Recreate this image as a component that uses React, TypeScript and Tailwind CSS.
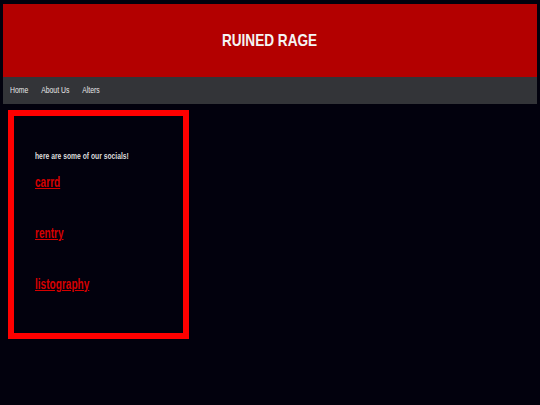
export default function App() {
  return (
    <div
      className="min-h-[405px] w-full bg-[#02010d] pt-1 px-[3px]"
      style={{ fontFamily: '"Liberation Sans", Arial, sans-serif' }}
    >
      {/* Header */}
      <div className="h-[73px] bg-[#b30000] flex items-center justify-center">
        <h1 className="text-[17px] font-bold text-[#f4f4f4] scale-x-[0.8]">RUINED RAGE</h1>
      </div>

      {/* Nav */}
      <nav className="h-[27px] bg-[#333438] flex items-center px-[7px]">
        <div className="flex items-center gap-[17px] text-[9px] text-[#e8e8e8] origin-left scale-x-[0.76]">
          <a>Home</a>
          <a>About Us</a>
          <a>Alters</a>
        </div>
      </nav>

      {/* Socials box */}
      <div className="mt-[6px] ml-[5px] w-[181px] h-[229px] border-[6px] border-[#ff0000] px-[21px] pt-[34px]">
        <p className="text-[9px] font-bold text-[#dcdcdc] origin-left scale-x-[0.75] whitespace-nowrap">
          here are some of our socials!
        </p>
        <div className="flex flex-col items-start gap-[30px] mt-[8px]">
          <a className="block origin-left scale-x-[0.72] text-[14px] font-bold text-[#d60000] underline">carrd</a>
          <a className="block origin-left scale-x-[0.72] text-[14px] font-bold text-[#d60000] underline">rentry</a>
          <a className="block origin-left scale-x-[0.72] text-[14px] font-bold text-[#d60000] underline">listography</a>
        </div>
      </div>
    </div>
  );
}
